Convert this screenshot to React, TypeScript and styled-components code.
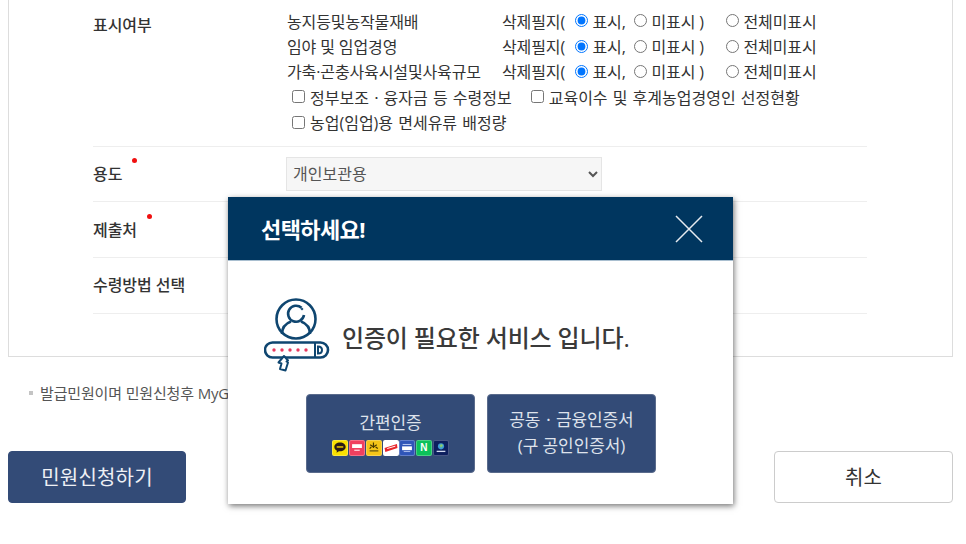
import React from 'react';
import styled, { createGlobalStyle } from 'styled-components';

const GlobalStyle = createGlobalStyle`
  html, body {
    margin: 0;
    padding: 0;
    height: 544px;
    overflow: hidden;
    background: #fff;
  }
  body {
    font-family: "Open Sans", "Noto Sans CJK KR", sans-serif;
    color: #333;
  }
`;

const Page = styled.div`
  position: relative;
  width: 966px;
  height: 544px;
  padding: 0 13px 0 8px;
  box-sizing: border-box;
  overflow: hidden;
`;

const FormPanel = styled.div`
  border: 1px solid #ddd;
  border-top: 0;
  padding: 0 85px 42.5px 84px;
`;

const FormRow = styled.div<{ $tall?: boolean }>`
  display: grid;
  grid-template-columns: 194px 1fr;
  align-items: ${props => (props.$tall ? 'start' : 'center')};
  height: ${props => (props.$tall ? '146.5px' : '55.7px')};
  box-sizing: border-box;
  padding-top: ${props => (props.$tall ? '8px' : '0')};
  border-bottom: 1px solid #eee;
`;

const Label = styled.div<{ $tall?: boolean }>`
  position: relative;
  width: max-content;
  font-size: 16px;
  font-weight: 500;
  letter-spacing: -0.05px;
  color: #333;
  line-height: 20px;
  margin-top: ${props => (props.$tall ? '7px' : '0')};
`;

const RequiredDot = styled.span`
  position: absolute;
  top: -6px;
  right: -15px;
  width: 5px;
  height: 5px;
  border-radius: 50%;
  background: #f01010;
`;

const DisplayLine = styled.div`
  display: flex;
  align-items: center;
  height: 25.4px;
  font-size: 16px;
  letter-spacing: -0.12px;
  color: #333;
  white-space: nowrap;
`;

const ItemName = styled.span`
  width: 215px;
  flex: none;
`;

const RadioGroup = styled.span<{ $width: number }>`
  display: flex;
  align-items: center;
  flex: none;
  width: ${props => props.$width}px;
`;

const RadioInput = styled.input`
  width: 13px;
  height: 13px;
  margin: 0 5px 0 0;
  flex: none;
`;

const CheckLine = styled.div`
  display: flex;
  align-items: center;
  height: 25.4px;
  padding-left: 5px;
  font-size: 16px;
  letter-spacing: 0;
  word-spacing: 1px;
  white-space: nowrap;
`;

const CheckItem = styled.label`
  display: flex;
  align-items: center;
  margin-right: 19px;
`;

const CheckInput = styled.input`
  width: 13px;
  height: 13px;
  margin: 0 5px 0 0;
`;

const SelectBox = styled.select`
  width: 316px;
  height: 34px;
  margin-left: -1px;
  padding: 0 2px;
  background: #f6f6f6;
  border: 1px solid #e5e5e5;
  font-family: inherit;
  font-size: 16px;
  color: #555;
`;

const Note = styled.p`
  position: relative;
  margin: 24px 0 0;
  padding-left: 32px;
  font-size: 15px;
  line-height: 24px;
  letter-spacing: -0.15px;
  color: #555;

  &::before {
    content: '';
    position: absolute;
    left: 21px;
    top: 10px;
    width: 4px;
    height: 4px;
    background: #c4c4c4;
  }
`;

const Actions = styled.div`
  display: flex;
  justify-content: space-between;
  margin-top: 45.5px;
`;

const ActionButton = styled.button<{ $primary?: boolean }>`
  width: ${props => (props.$primary ? '178px' : '179px')};
  height: 52px;
  border-radius: 4px;
  border: 1px solid ${props => (props.$primary ? '#334b77' : '#ccc')};
  background: ${props => (props.$primary ? '#334b77' : '#fff')};
  color: ${props => (props.$primary ? '#eef0f5' : '#333')};
  font-family: inherit;
  font-size: 20px;
  letter-spacing: 0.2px;
`;

const Modal = styled.div`
  position: absolute;
  left: 228px;
  top: 197px;
  width: 505px;
  height: 307px;
  background: #fff;
  box-shadow: 1px 2px 6px rgba(0, 0, 0, 0.55);
`;

const ModalHeader = styled.div`
  display: flex;
  align-items: center;
  justify-content: space-between;
  height: 63px;
  padding: 0 30px 0 33px;
  background: #00365f;
  border-bottom: 1px solid #a9bfd0;
`;

const ModalTitle = styled.h2`
  margin: 0 0 2px;
  font-size: 22px;
  font-weight: 700;
  letter-spacing: -0.6px;
  color: #fff;
`;

const CloseButton = styled.button`
  display: flex;
  padding: 0;
  border: 0;
  background: none;
`;

const ModalBody = styled.div`
  padding: 37px 0 0 36px;
`;

const Notice = styled.div`
  display: flex;
  align-items: center;
  gap: 12px;
`;

const NoticeText = styled.p`
  margin: 0;
  font-size: 24px;
  font-weight: 500;
  letter-spacing: -0.15px;
  color: #3a3a3a;
`;

const ChoiceRow = styled.div`
  display: flex;
  gap: 12px;
  margin: 20px 0 0 42px;
`;

const ChoiceButton = styled.button`
  display: flex;
  flex-direction: column;
  align-items: center;
  justify-content: center;
  width: 169px;
  height: 79px;
  padding: 0 0 2px;
  border: 1px solid #5a6b8c;
  border-radius: 4px;
  background: #334b77;
  color: #dfe3ec;
  font-family: inherit;
  font-size: 17px;
  line-height: 26px;
  letter-spacing: -0.1px;
`;

const ProviderRow = styled.span`
  display: flex;
  gap: 0.7px;
  margin-top: 4px;
`;

const ProviderTile = styled.span<{ $bg: string; $fg?: string }>`
  display: flex;
  align-items: center;
  justify-content: center;
  width: 16px;
  height: 16px;
  border-radius: 2px;
  border: 1px solid rgba(255, 255, 255, 0.25);
  box-sizing: border-box;
  background: ${props => props.$bg};
  color: ${props => props.$fg || '#fff'};
  font-family: "Liberation Sans", sans-serif;
  font-size: 10px;
  line-height: 1;
  font-weight: 700;
  letter-spacing: 0;
`;

const PersonKeyIcon = () => (
  <svg width="66" height="76" viewBox="0 0 66 76" fill="none" stroke="#0f4670" strokeWidth="2.6">
    <circle cx="32" cy="21" r="19.5" />
    <path d="M37.500 9.800A8 8 0 1 0 40 17" />
    <path d="M18 36c0-8 5-11 9-12.500M46 36c0-8-5-11-9-12.500" />
    <circle cx="38" cy="11" r="1" fill="#0f4670" strokeWidth="0.5" />
    <rect x="1" y="44.500" width="63" height="15" rx="7.500" />
    <path d="M51 44.500v15M54 48.500c3 0 4 2 4 3.500s-1 3.500-4 3.500z" strokeWidth="2" />
    <g fill="#e8395f" stroke="none">
      <circle cx="10" cy="52" r="1.700" />
      <circle cx="18" cy="52" r="1.700" />
      <circle cx="26" cy="52" r="1.700" />
      <circle cx="34" cy="52" r="1.700" />
      <circle cx="42" cy="52" r="1.700" />
    </g>
    <path
      d="M20 58l4 4.500-1.500 1 1.500 1-2.500 8-5.500-1.500 1.500-5.500-3-1z"
      fill="#fff"
      strokeWidth="2"
      strokeLinejoin="round"
    />
  </svg>
);

const KakaoMark = () => (
  <svg width="12" height="11" viewBox="0 0 11 10">
    <path d="M5.500 0.500C2.500 0.500 0.300 2.300 0.300 4.500c0 1.500 1 2.700 2.400 3.400L2.300 9.800l2.200-1.400h1c3 0 5.200-1.800 5.200-3.900S8.500 0.500 5.500 0.500z" fill="#2a1c16" />
    <rect x="2.500" y="3.800" width="6" height="1.400" fill="#e9c400" />
  </svg>
);

const PassMark = () => (
  <svg width="12" height="10" viewBox="0 0 11 9">
    <rect x="1" y="1" width="9" height="3.500" fill="#fff" />
    <rect x="3" y="6" width="5" height="1.200" fill="#ffd0d8" />
  </svg>
);

const KbMark = () => (
  <svg width="12" height="11" viewBox="0 0 11 10">
    <path d="M5 0.500v5M2 2.500l3 2 3-2M3 4.500L1.500 6M7 4.500L9 6" stroke="#4a3a00" strokeWidth="1.100" fill="none" />
    <rect x="1.500" y="7.500" width="8" height="1.200" fill="#6b5a10" />
  </svg>
);

const StampMark = () => (
  <svg width="14" height="10" viewBox="0 0 13 9">
    <path d="M0.500 4.500L12 0.800 12.500 4.500 1.200 8.200z" fill="#e8252b" />
    <path d="M3 5L10.500 2.800" stroke="#fff" strokeWidth="0.900" />
  </svg>
);

const BankMark = () => (
  <svg width="12" height="10" viewBox="0 0 11 9">
    <rect x="1.500" y="0.800" width="8" height="0.900" fill="#b9c9f2" />
    <rect x="1" y="3" width="9" height="3.500" fill="#fff" />
    <rect x="2.500" y="7.400" width="6" height="0.800" fill="#b9c9f2" />
  </svg>
);

const GlobeMark = () => (
  <svg width="12" height="12" viewBox="0 0 11 11">
    <circle cx="5.500" cy="4" r="2.800" fill="#3d9bd6" />
    <path d="M4 3l2-1.200 1.500 1.500-2 2z" fill="#86c96f" />
    <rect x="1.500" y="8" width="8" height="1.200" fill="#d5dcf0" />
  </svg>
);

const DISPLAY_ITEMS = ['농지등및농작물재배', '임야 및 임업경영', '가축·곤충사육시설및사육규모'];

function App() {
  return (
    <Page>
      <GlobalStyle />
      <FormPanel>
        <FormRow $tall>
          <Label $tall>표시여부</Label>
          <div>
            {DISPLAY_ITEMS.map((item, index) => (
              <DisplayLine key={item}>
                <ItemName>{item}</ItemName>
                <RadioGroup $width={72.5}>삭제필지(</RadioGroup>
                <RadioGroup $width={59}>
                  <RadioInput type="radio" name={`show${index}`} defaultChecked />
                  표시,
                </RadioGroup>
                <RadioGroup $width={92}>
                  <RadioInput type="radio" name={`show${index}`} />
                  미표시 )
                </RadioGroup>
                <RadioGroup $width={100}>
                  <RadioInput type="radio" name={`all${index}`} />
                  전체미표시
                </RadioGroup>
              </DisplayLine>
            ))}
            <CheckLine>
              <CheckItem>
                <CheckInput type="checkbox" />
                정부보조ㆍ융자금 등 수령정보
              </CheckItem>
              <CheckItem>
                <CheckInput type="checkbox" />
                교육이수 및 후계농업경영인 선정현황
              </CheckItem>
            </CheckLine>
            <CheckLine>
              <CheckItem>
                <CheckInput type="checkbox" />
                농업(임업)용 면세유류 배정량
              </CheckItem>
            </CheckLine>
          </div>
        </FormRow>
        <FormRow>
          <Label>
            용도
            <RequiredDot />
          </Label>
          <SelectBox defaultValue="개인보관용">
            <option>개인보관용</option>
          </SelectBox>
        </FormRow>
        <FormRow>
          <Label>
            제출처
            <RequiredDot />
          </Label>
        </FormRow>
        <FormRow>
          <Label>수령방법 선택</Label>
        </FormRow>
      </FormPanel>

      <Note>발급민원이며 민원신청후 MyGOV</Note>

      <Actions>
        <ActionButton $primary>민원신청하기</ActionButton>
        <ActionButton>취소</ActionButton>
      </Actions>

      <Modal>
        <ModalHeader>
          <ModalTitle>선택하세요!</ModalTitle>
          <CloseButton aria-label="닫기">
            <svg width="28" height="28" viewBox="0 0 28 28" stroke="#e6ebf0" strokeWidth="1.5">
              <path d="M1 1l26 26M27 1L1 27" />
            </svg>
          </CloseButton>
        </ModalHeader>
        <ModalBody>
          <Notice>
            <PersonKeyIcon />
            <NoticeText>인증이 필요한 서비스 입니다.</NoticeText>
          </Notice>
          <ChoiceRow>
            <ChoiceButton>
              간편인증
              <ProviderRow>
                <ProviderTile $bg="#fae100"><KakaoMark /></ProviderTile>
                <ProviderTile $bg="#f0405f"><PassMark /></ProviderTile>
                <ProviderTile $bg="#f5c518"><KbMark /></ProviderTile>
                <ProviderTile $bg="#ffffff"><StampMark /></ProviderTile>
                <ProviderTile $bg="#2f55b8"><BankMark /></ProviderTile>
                <ProviderTile $bg="#0cc15a">N</ProviderTile>
                <ProviderTile $bg="#0d1f5e"><GlobeMark /></ProviderTile>
              </ProviderRow>
            </ChoiceButton>
            <ChoiceButton>
              공동ㆍ금융인증서
              <br />
              (구 공인인증서)
            </ChoiceButton>
          </ChoiceRow>
        </ModalBody>
      </Modal>
    </Page>
  );
}

export default App;
